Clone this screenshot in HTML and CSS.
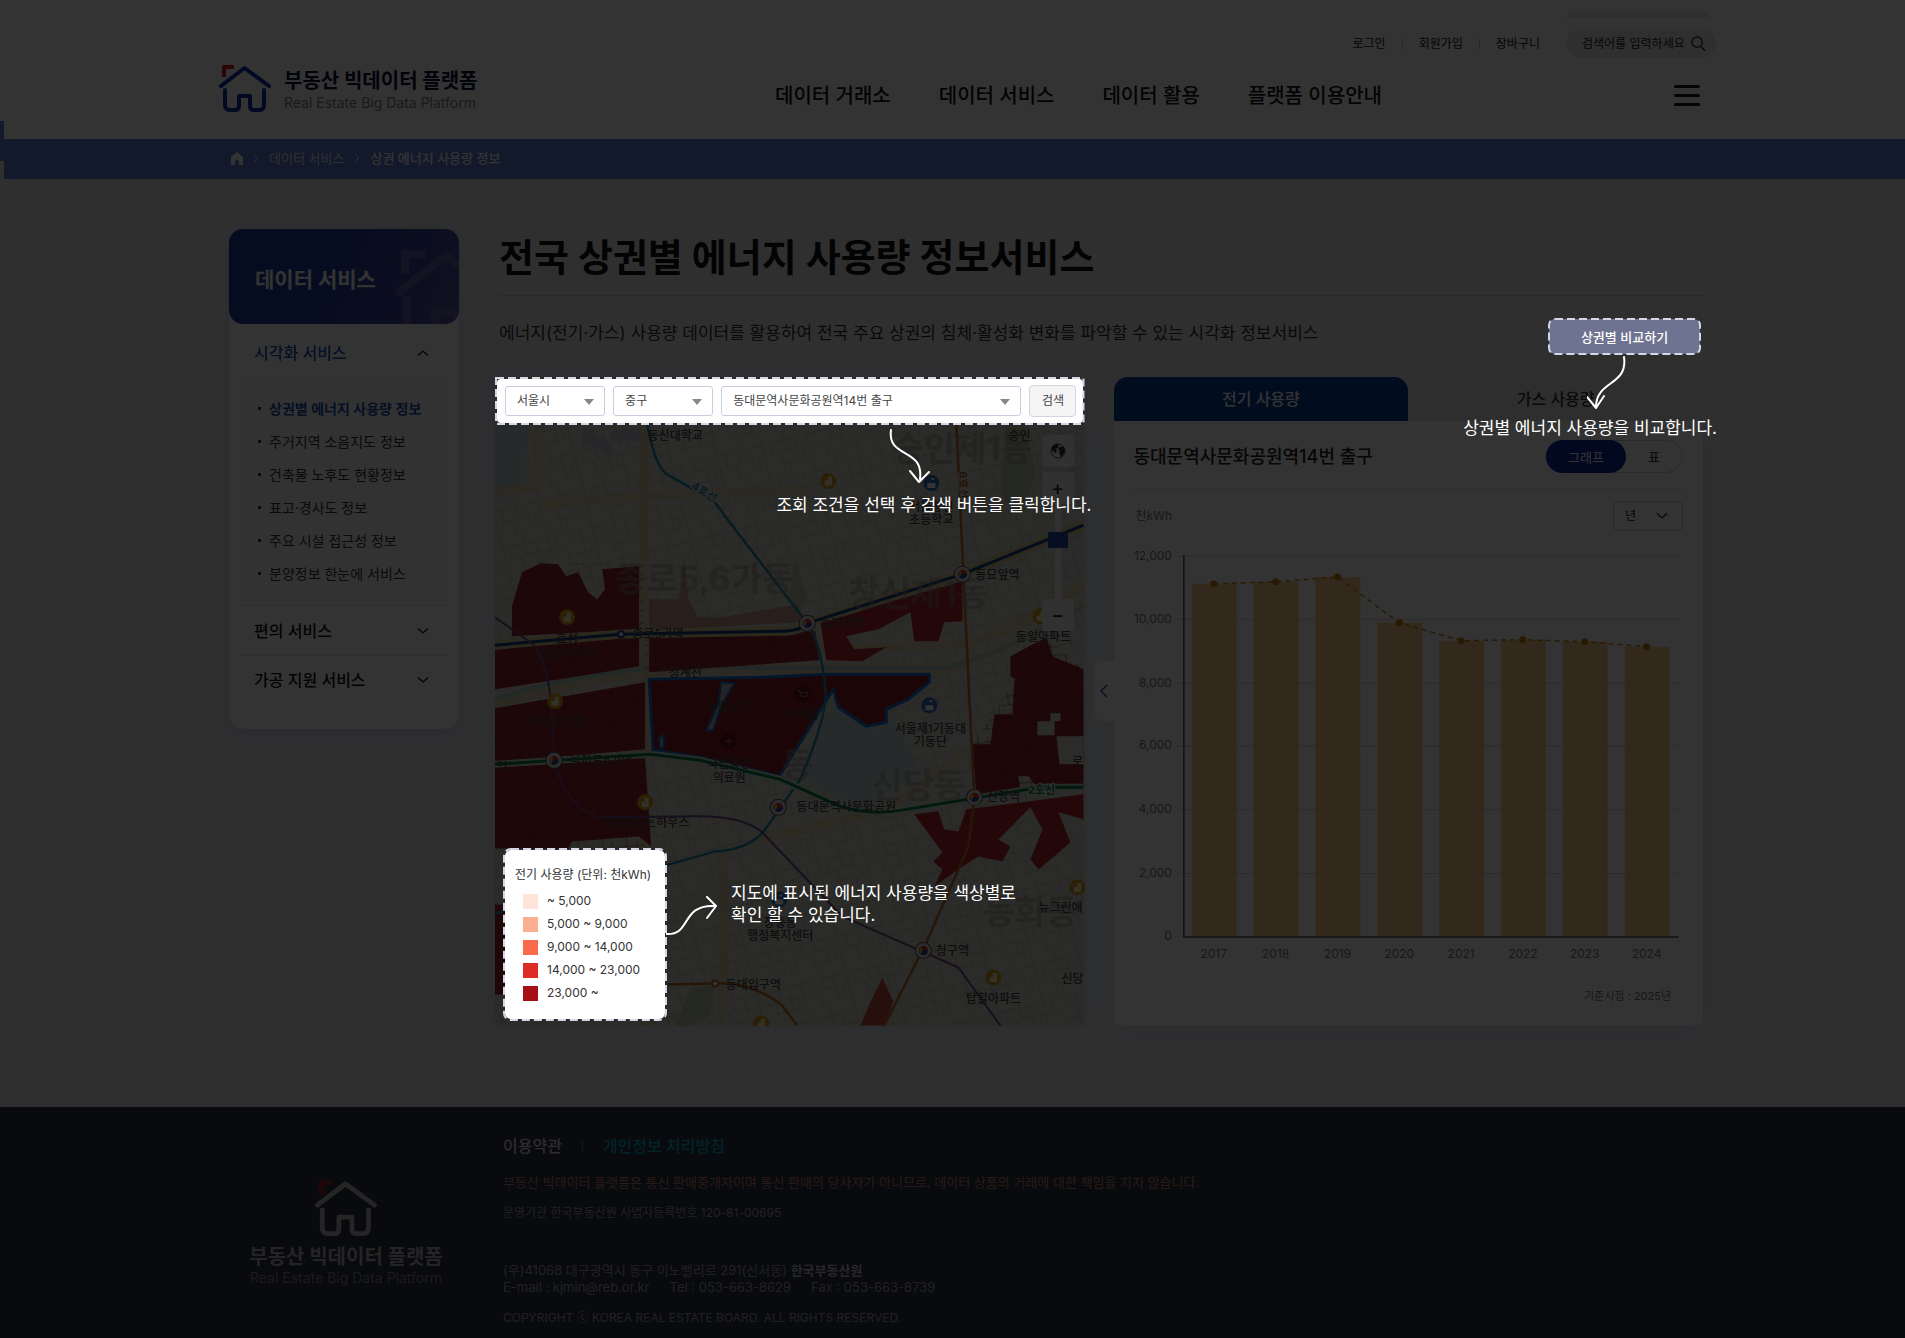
FILE: index.html
```html
<!DOCTYPE html>
<html lang="ko">
<head>
<meta charset="utf-8">
<meta name="viewport" content="width=device-width, initial-scale=1">
<title>전국 상권별 에너지 사용량 정보서비스</title>
<link rel="stylesheet" href="styles.css">
</head>
<body>
<svg class="defs" width="0" height="0" aria-hidden="true">
  <symbol id="house" viewBox="0 0 52 48">
    <path d="M5 13V3h10" class="house-corner"/>
    <path d="M2 22 25.500 4 50 22M6 26v15q0 5 5 5h5q4 0 4-4V32h11v10q0 4 4 4h5q5 0 5-5V26" class="house-line"/>
  </symbol>
  <symbol id="down" viewBox="0 0 12 8"><path d="M1 1.500 6 6l5-4.500" fill="none" stroke="currentColor" stroke-width="1.300"/></symbol>
</svg>

<header class="header">
  <div class="util">
    <a href="#">로그인</a><a href="#">회원가입</a><a href="#">장바구니</a>
    <label class="search"><input type="text" placeholder="검색어를 입력하세요" aria-label="검색어">
      <svg width="16" height="18" viewBox="0 0 16 18" fill="none" stroke="#333" stroke-width="1.500"><circle cx="6.500" cy="7" r="5.500"/><path d="m10.500 11.500 4.500 5"/></svg>
    </label>
  </div>
  <div class="main-bar">
    <a class="logo" href="#">
      <svg width="52" height="48"><use href="#house"/></svg>
      <span><strong>부동산 빅데이터 플랫폼</strong><small>Real Estate Big Data Platform</small></span>
    </a>
    <nav class="gnb"><a href="#">데이터 거래소</a><a href="#">데이터 서비스</a><a href="#">데이터 활용</a><a href="#">플랫폼 이용안내</a></nav>
    <button class="menu" type="button" aria-label="전체 메뉴"><i></i><i></i><i></i></button>
  </div>
</header>

<nav class="crumbs" aria-label="현재 위치">
  <a href="#" aria-label="홈"><svg width="12" height="13" viewBox="0 0 12 13"><path d="M6 0 12 5v8H8V9q-2-3-4 0v4H0V5z" fill="#fff"/></svg></a>
  <svg class="sep" width="6" height="10" viewBox="0 0 6 10"><path d="m1 1 4 4-4 4" fill="none" stroke="#d5def8"/></svg>
  <a href="#">데이터 서비스</a>
  <svg class="sep" width="6" height="10" viewBox="0 0 6 10"><path d="m1 1 4 4-4 4" fill="none" stroke="#d5def8"/></svg>
  <strong>상권 에너지 사용량 정보</strong>
</nav>

<div class="page">
  <aside class="side">
    <h2>데이터 서비스<svg width="78" height="76" viewBox="0 0 39 38"><use href="#house" width="52" height="48"/></svg></h2>
    <a class="group open" href="#">시각화 서비스<svg width="12" height="8"><use href="#down"/></svg></a>
    <ul>
      <li class="on"><a href="#">상권별 에너지 사용량 정보</a></li>
      <li><a href="#">주거지역 소음지도 정보</a></li>
      <li><a href="#">건축물 노후도 현황정보</a></li>
      <li><a href="#">표고·경사도 정보</a></li>
      <li><a href="#">주요 시설 접근성 정보</a></li>
      <li><a href="#">분양정보 한눈에 서비스</a></li>
    </ul>
    <a class="group" href="#">편의 서비스<svg width="12" height="8"><use href="#down"/></svg></a>
    <a class="group" href="#">가공 지원 서비스<svg width="12" height="8"><use href="#down"/></svg></a>
  </aside>

  <main class="content">
    <h1>전국 상권별 에너지 사용량 정보서비스</h1>
    <div class="intro">
      <p>에너지(전기·가스) 사용량 데이터를 활용하여 전국 주요 상권의 침체·활성화 변화를 파악할 수 있는 시각화 정보서비스</p>
      <div class="compare spot">
        <button type="button">상권별 비교하기</button>
        <svg class="dash"><rect x="1" y="1" rx="6"/></svg>
        <div class="tip tip-compare">
          <svg width="40" height="56" viewBox="0 0 40 56"><path d="M33 1C37 30 6 24 5 50M-4 41 5 52l8-12" transform="translate(4 1)"/></svg>
          <p>상권별 에너지 사용량을 비교합니다.</p>
        </div>
      </div>
    </div>

    <div class="columns">
      <section class="map" aria-label="지도">
        <svg class="map-art" viewBox="495 378 589 648" preserveAspectRatio="xMidYMid slice">
          <defs>
            <pattern id="streets" width="46" height="38" patternUnits="userSpaceOnUse" patternTransform="rotate(-14)">
              <path d="M0 9h46M0 21q12-3 24 0t22 0M0 32h30M9 0v21M20 9v29M33 0v38M41 9v12M27 21v11M4 21v17" fill="none" stroke="#bdb9b1" stroke-width=".8"/>
            </pattern>
            <pattern id="blocks" width="24" height="22" patternUnits="userSpaceOnUse" patternTransform="rotate(-6)">
              <path d="M0 6h24M0 15h24M7 0v22M17 0v15" fill="none" stroke="#5e1016" stroke-width=".7"/>
            </pattern>
            <g id="station"><circle r="8" fill="#ddd" stroke="#555"/><circle r="4.500" fill="#e02a30"/><path d="M-4.500 0a4.500 4.500 0 0 0 9 0z" fill="#174ba5"/><path d="M-3 3.400Q-5 0-2-4 0 0-3 3.400z" fill="#f4c31c"/></g>
            <g id="poi"><circle r="8" fill="#d79a16"/><path d="M-4 5V-1h3v-4h5V5zM1-3v1M1 0v1" fill="#fff3c5" stroke="#d79a16" stroke-width=".8"/></g>
            <g id="school"><circle r="8" fill="#2a6dbd"/><path d="M-4 0h8v5h-8zM0 0v-5h3v2H0" fill="#fff"/></g>
          </defs>
          <path fill="#d7d5ca" d="M495 378h589v648H495z"/>
          <path fill="url(#streets)" d="M495 378h589v648H495z"/>
          <path fill="#c4d2d0" d="M495 426h34l-4 60-30 20zM833 705l40 25 20-10 30 55-60 30-45-15-20-20z"/>
          <path fill="#bac3a3" d="M1005 426h20l10 50-15 40-20-20zM795 560l12 40-8 15-10-20zM690 990l25-5-5 30-20 11h-15z"/>
          <path fill="#c3bccb" d="M582 430h12v8h11l8 14-6 4-8-7-16-2zM613 430h28v12h-32z"/>
          <g fill="none" stroke="#d9ceaa" stroke-width="9">
            <path d="M538 378v110l-43 5M538 506l110-10 160-5M644 378v648M495 676q150-30 325-26l140-5q50-10 124-60M495 705q130-40 260-35h190q70-20 138-65M758 840l130-30 80-60M720 850q10 60 0 176"/>
          </g>
          <path fill="none" stroke="#a6c8bf" stroke-width="4" d="M495 700q120-40 260-31h190q70-20 138-62"/>
          <g fill="#96262c">
            <path d="m541 564 17 1 8 12 12-4 10 20 9 7 8-10-3-20 37-3v63l-127 7v-30l10-34zM495 650l144-13v30l-79 13-65 10zM649 636l166-4 4 29-170 12z"/>
            <path d="M495 709 645 683v67l-150 13zM495 768l150-10 6 89-12-10-67 5-4 7h-73zM495 905h10v90h-10z"/>
            <path d="m1046 638 6 19 31 13v116l-45 4-10-13h-10l2 13-44 7-4-52h18l4-30h18l2-35 20 13-24-16v-20z"/>
          </g>
          <g fill="#b32c2f">
            <path d="m820 622 142-40v40l-18 1-6 19h-24l-4-29-32 17-32 7 8 13 32-2-24 14-36-1z"/>
            <path d="m914 815 24-3 6 18 14 2 8-22 117-15v25l-25-7 12 30-32 27-8-10 12-30-12-22-32 32 12 7-8 15-24-5-16 10-28 20 8-17-9-8 9-9z"/>
          </g>
          <path fill="#c9988a" d="M649 600h30l5-40 4 40 10 18h23l76-13 4 18-152 8z"/>
          <path fill="#c0503f" d="m882 978 11 24-9 24h-24l10-23z"/>
          <path fill="url(#blocks)" d="m541 564 98 3v63l-144 20v40l144-23v-37h176l4 29-170 12-5 10v167l-150-1V709l150-26V564zM1046 638l37 32v116l-107 11-4-52z" opacity=".6"/>
          <path fill="#851c23" stroke="#1774cf" stroke-width="3" d="m649 680 112-2 64-3h104v8l-21 17-22 10v13l-20 4-28-19-5-18-54 87-78-19-48-7z"/>
          <path fill="#b9b2ad" stroke="#1774cf" stroke-width="2" d="m721 683 13 1-14 24-7 23h-7l12-26zM660 750l-1-12 4-2 1 10z"/>
          <g fill="#d7d5ca"><path d="M1037 722h17v14h-17zM1056 737h27v28h-24zM1050 714h10v8h-10z"/></g>
          <g fill="none" stroke-linejoin="round">
            <path stroke="#d5c58c" stroke-width="9" d="m495 646 125-11 160-3q20 0 27-8l155-49 121-49"/>
            <path stroke="#123f86" stroke-width="3" d="m495 646 125-11 160-3q20 0 27-8l155-49 121-49"/>
            <path stroke="#268cab" stroke-width="2.500" d="M646 420q9 50 22 56l36 20q12 6 20 20l83 108q14 20 18 66 3 25-25 90l-35 50q-15 20-50 22l-230 65"/>
            <path stroke="#c16a25" stroke-width="2.500" d="m956 426 7 149 5 105 6 118-6 49-42 96-42 83M667 985l48-1q35-2 66 21l16 21"/>
            <path stroke="#c6dccb" stroke-width="7" d="m495 765 155-10 50 6 80 19 60 27q30 9 60 4l140-23h43"/>
            <path stroke="#087e47" stroke-width="3" d="m495 765 155-10 50 6 80 19 60 27q30 9 60 4l140-23h43"/>
            <path stroke="#76498f" stroke-width="2" d="m495 618 38 27q15 20 18 60l4 60q12 45 45 53l89-1q50-2 72 15l81 85 80 35 36 16 42 58"/>
          </g>
          <g class="district"><text x="704" y="592">종로5,6가동</text><text x="918" y="607">창신제1동</text><text x="962" y="462">숭인제1동</text><text x="918" y="799">신당동</text><text x="1030" y="925">동화동</text><text x="797" y="778">동</text></g>
          <g class="place">
            <text x="675" y="441">동신대학교</text><text x="1019" y="441">숭인</text><text x="931" y="512">서울창신</text><text x="931" y="525">초등학교</text><text x="997" y="580">동묘앞역</text><text x="842" y="628">동대문역</text><text x="658" y="639">종로5가역</text><text x="567" y="644">효성</text><text x="567" y="659">쥬얼리시티</text><text x="685" y="678">청계천</text><text x="1043" y="642">동일아파트</text><text x="555" y="727">투유호스텔</text><text x="728" y="712">동일상가</text><text x="802" y="720">두타몰</text><text x="601" y="766">을지로4가역</text><text x="729" y="769">국립중앙</text><text x="729" y="783">의료원</text><text x="930" y="734">서울제1기동대</text><text x="930" y="747">기동단</text><text x="846" y="812">동대문역사문화공원</text><text x="1003" y="802">신당역</text><text x="645" y="828">케이게스트하우스</text><text x="1077" y="767">로</text><text x="780" y="928">장충동</text><text x="780" y="941">행정복지센터</text><text x="1060" y="913">뉴그린애</text><text x="952" y="956">청구역</text><text x="753" y="989">동대입구역</text><text x="993" y="1003">탑힐아파트</text><text x="1072" y="983">신당</text><text x="502" y="772">역</text>
          </g>
          <g class="line-tag"><text transform="translate(702 496) rotate(32)" fill="#2d87a3">4호선</text><text transform="translate(959 486) rotate(88)" fill="#b15d20">6호선</text><text x="1041" y="795" fill="#087e47">2호선</text></g>
          <use href="#station" x="807" y="624"/><use href="#station" x="962" y="575"/><use href="#station" x="554" y="761"/><use href="#station" x="974" y="798"/><use href="#station" x="778" y="808"/><use href="#station" x="923" y="951"/>
          <circle cx="621" cy="635" r="3" fill="#fff" stroke="#123f86" stroke-width="2"/><circle cx="715" cy="984" r="3" fill="#fff" stroke="#c16a25" stroke-width="2"/>
          <use href="#poi" x="828" y="482"/><use href="#poi" x="567" y="618"/><use href="#poi" x="555" y="702"/><use href="#poi" x="645" y="803"/><use href="#poi" x="1077" y="888"/><use href="#poi" x="993" y="978"/><use href="#poi" x="761" y="1024"/><use href="#poi" x="1040" y="617"/>
          <use href="#school" x="931" y="484"/><use href="#school" x="929" y="706"/><use href="#school" x="779" y="900"/>
          <g fill="#651018"><circle cx="802" cy="695" r="8"/><circle cx="728" cy="742" r="8"/><path d="M724 742h8M728 738v8M797 691h2l2 6h5l2-4h-8" fill="none" stroke="#b96464"/></g>
        </svg>

        <form class="filters spot">
          <div class="filters-inner">
            <label class="pick"><select aria-label="시도"><option>서울시</option></select></label>
            <label class="pick"><select aria-label="시군구"><option>중구</option></select></label>
            <label class="pick wide"><select aria-label="상권"><option>동대문역사문화공원역14번 출구</option></select></label>
            <button type="button">검색</button>
          </div>
          <svg class="dash"><rect x="1" y="1"/></svg>
          <div class="tip tip-search">
            <svg width="44" height="56" viewBox="0 0 44 56"><path d="M5 1C1 30 38 18 34 50M24 42l9 11 10-10"/></svg>
            <p>조회 조건을 선택 후 검색 버튼을 클릭합니다.</p>
          </div>
        </form>

        <div class="zoomer">
          <button type="button" aria-label="전체 보기"><svg width="16" height="16" viewBox="0 0 16 16"><circle cx="8" cy="8" r="7" fill="none" stroke="#444"/><path d="M2 4q3-4 6-3l1 3-3 2 1 3-2 1-3-3zM10 4l4 0 1 5-4 5-2-4 1-2-2-2z" fill="#333"/></svg></button>
          <button type="button" aria-label="확대">+</button>
          <span class="track"><i></i></span>
          <button type="button" aria-label="축소">−</button>
        </div>

        <div class="legend spot">
          <h3>전기 사용량 (단위: 천kWh)</h3>
          <ul>
            <li class="lv1">~ 5,000</li><li class="lv2">5,000 ~ 9,000</li><li class="lv3">9,000 ~ 14,000</li><li class="lv4">14,000 ~ 23,000</li><li class="lv5">23,000 ~</li>
          </ul>
          <svg class="dash"><rect x="1" y="1" rx="7"/></svg>
          <div class="tip tip-legend">
            <svg width="52" height="44" viewBox="0 0 52 44"><path d="M0 38C26 40 14 8 49 10M41 1l9 9-9 12"/></svg>
            <p>지도에 표시된 에너지 사용량을 색상별로<br>확인 할 수 있습니다.</p>
          </div>
        </div>
      </section>

      <section class="panel">
        <button class="fold" type="button" aria-label="접기"><svg width="8" height="14" viewBox="0 0 8 14"><path d="M7 1 1 7l6 6" fill="none" stroke="#1c50b4" stroke-width="1.500"/></svg></button>
        <div class="tabs"><button class="on" type="button">전기 사용량</button><button type="button">가스 사용량</button></div>
        <div class="panel-body">
          <div class="panel-head">
            <h2>동대문역사문화공원역14번 출구</h2>
            <div class="toggle"><button class="on" type="button">그래프</button><button type="button">표</button></div>
          </div>
          <div class="unit"><span>천kWh</span>
            <label class="period"><select aria-label="기간 단위"><option>년</option></select><svg width="12" height="8"><use href="#down"/></svg></label>
          </div>
          <svg class="chart" viewBox="1133 536 551 434" role="img" aria-label="연도별 전기 사용량">
            <path d="M1175 556.500h504M1175 619.500h504M1175 683.500h504M1175 746.500h504M1175 810.500h504M1175 874.500h504M1175 937.500h8" stroke="#e0e0e0"/>
            <path fill="#f9c97f" fill-opacity=".9" d="M1191 584h45v353h-45zM1253 582h45v355h-45zM1315 577h45v360h-45zM1377 623h45v314h-45zM1439 641h45v296h-45zM1501 640h45v297h-45zM1563 642h45v295h-45zM1625 647h45v290h-45z"/>
            <path d="M1175 619.500h504M1175 683.500h504M1175 746.500h504M1175 810.500h504M1175 874.500h504" stroke="#000" stroke-opacity=".05"/>
            <path d="M1183 555v383h496" fill="none" stroke="#555" stroke-width="1.500"/>
            <path d="m1213 584 62-2 62-5 62 46 62 18 62-1 62 2 62 5" fill="none" stroke="#c8861a" stroke-width="1.500" stroke-dasharray="5 4"/>
            <g fill="#c98203"><circle cx="1213" cy="584" r="3.500"/><circle cx="1275" cy="582" r="3.500"/><circle cx="1337" cy="577" r="3.500"/><circle cx="1399" cy="623" r="3.500"/><circle cx="1461" cy="641" r="3.500"/><circle cx="1523" cy="640" r="3.500"/><circle cx="1585" cy="642" r="3.500"/><circle cx="1647" cy="647" r="3.500"/></g>
            <g class="ylab"><text x="1171" y="560">12,000</text><text x="1171" y="623">10,000</text><text x="1171" y="687">8,000</text><text x="1171" y="750">6,000</text><text x="1171" y="814">4,000</text><text x="1171" y="878">2,000</text><text x="1171" y="941">0</text></g>
            <g class="xlab"><text x="1213" y="959">2017</text><text x="1275" y="959">2018</text><text x="1337" y="959">2019</text><text x="1399" y="959">2020</text><text x="1461" y="959">2021</text><text x="1523" y="959">2022</text><text x="1585" y="959">2023</text><text x="1647" y="959">2024</text></g>
          </svg>
          <p class="note">기준시점 : 2025년</p>
        </div>
      </section>
    </div>
  </main>
</div>

<footer class="footer">
  <div class="foot-logo">
    <svg width="62" height="57"><use href="#house"/></svg>
    <strong>부동산 빅데이터 플랫폼</strong><small>Real Estate Big Data Platform</small>
  </div>
  <div class="foot-text">
    <nav><a href="#">이용약관</a><a class="privacy" href="#">개인정보 처리방침</a></nav>
    <p class="notice">부동산 빅데이터 플랫폼은 통신 판매중개자이며 통신 판매의 당사자가 아니므로, 데이터 상품의 거래에 대한 책임을 지지 않습니다.</p>
    <p class="org">운영기관 한국부동산원 사업자등록번호 120-81-00695</p>
    <address>(우)41068 대구광역시 동구 이노밸리로 291(신서동) <b>한국부동산원</b><br><span>E-mail : kjmin@reb.or.kr</span><span>Tel : 053-663-8629</span><span>Fax : 053-663-8739</span></address>
    <p class="copy">COPYRIGHT ⓒ KOREA REAL ESTATE BOARD. ALL RIGHTS RESERVED.</p>
  </div>
</footer>
<div class="edge"></div>
<div class="sliver"></div>
<div class="dim"></div>
</body>
</html>
```
FILE: styles.css
```css
* { box-sizing: border-box; margin: 0; padding: 0; }
body { position: relative; min-width: 1500px; background: #ebecf0; color: #111; font: 13px/20px Inter, "Noto Sans CJK KR", sans-serif; }
a { color: inherit; text-decoration: none; }
ul { list-style: none; }
button, input, select { font: inherit; color: inherit; border: 0; background: none; }
svg { display: block; }
.defs { position: absolute; }
.house-line, .house-corner { fill: none; stroke: currentColor; stroke-width: 4; stroke-linecap: round; stroke-linejoin: round; }
.house-corner { stroke: var(--corner, #d0211c); stroke-linecap: butt; }

/* page header */
.header { height: 139px; padding: 29px 189px 0 219px; background: #fff; }
.util { display: flex; justify-content: flex-end; align-items: center; height: 29px; font-size: 12px; }
.util a { padding: 0 16px; line-height: 12px; border-left: 1px solid #ccc; }
.util a:first-child { border: 0; }
.search { display: flex; align-items: center; width: 150px; height: 29px; margin-left: 10px; padding: 0 10px 0 16px; border-radius: 15px; background: #ebebf0; }
.search input { width: 109px; outline: 0; }
.search input::placeholder { color: #222; opacity: 1; }
.main-bar { display: grid; grid-template-columns: 556px 1fr auto; }
.logo { display: flex; gap: 13px; margin-top: 6px; color: #0a2fa8; }
.logo strong, .logo small { display: block; }
.logo strong { padding-top: 5px; font-size: 20px; line-height: 24px; color: #101038; }
.logo small { font-size: 14px; line-height: 20px; color: #808080; }
.gnb { display: flex; gap: 48px; margin-top: 26px; font-size: 20px; line-height: 24px; font-weight: 500; }
.menu { display: grid; gap: 6px; align-content: start; width: 26px; margin: 27px 16px 0 0; }
.menu i { height: 3px; border-radius: 2px; background: #111; }

.crumbs { display: flex; align-items: center; gap: 10px; height: 40px; padding: 0 0 2px 231px; background: #557dd7; color: #e6ebfa; }
.crumbs strong { color: #fff; font-weight: 500; }

/* body columns */
.page { display: flex; align-items: flex-start; gap: 36px; padding: 50px 202px 81px 229px; }
.side { flex: none; width: 230px; padding-bottom: 25px; border-radius: 16px; background: #fff; box-shadow: 0 4px 20px #cdd2ec; }
.side h2 { position: relative; height: 95px; padding: 36px 26px; border-radius: 14px; overflow: hidden; background: linear-gradient(115deg, #34439a00 45%, #5350a0), #203f9c; color: #fff; font-size: 21px; line-height: 30px; }
.side h2 svg { position: absolute; right: -14px; bottom: 0; color: #5f61a8; --corner: #5f61a8; }
.group { display: flex; align-items: center; justify-content: space-between; height: 49px; margin: 0 10px; padding: 0 20px 0 15px; font-size: 16px; font-weight: 500; }
.group + .group { border-top: 1px solid #e3e3e3; }
.group.open { height: 53px; padding-top: 5px; color: #1b50b5; }
.group.open svg { transform: rotate(180deg); color: #111; }
.side ul { margin: 0 10px; padding: 15px 0 15px 19px; border-bottom: 1px solid #e0e0e0; background: #fbfbfb; }
.side li { display: flex; align-items: center; gap: 8px; height: 33px; font-size: 14px; color: #333; }
.side li::before { content: ""; width: 3px; height: 3px; background: #333; }
.side li.on a { color: #1b50b5; font-weight: 600; }

.content { flex: 1; min-width: 0; }
h1 { margin: 0 0 0 4px; padding-bottom: 10px; border-bottom: 1px solid #c8c9cd; font-size: 38px; line-height: 56px; }
.intro { display: flex; justify-content: space-between; padding: 22px 2px 22px 4px; }
.intro > p { font-size: 17px; line-height: 30px; color: #333; }
.columns { display: flex; gap: 29px; }
.map, .panel { position: relative; flex: 1 1 0; min-width: 0; }

/* map */
.map { box-shadow: 0 0 20px #d3d7ea; }
.map-art { width: 100%; height: 100%; }
.district { font-size: 34px; font-weight: 700; fill: #8d8b86; text-anchor: middle; opacity: .45; }
.place { font-size: 12px; font-weight: 500; fill: #4b4546; text-anchor: middle; }
.line-tag { font-size: 11px; font-weight: 700; text-anchor: middle; stroke: #e6e6e6; stroke-width: 2px; paint-order: stroke; }
.zoomer { position: absolute; top: 58px; right: 11px; display: flex; flex-direction: column; align-items: center; }
.zoomer button { display: grid; place-items: center; width: 32px; height: 32px; border-radius: 4px; background: #f4f4f4; font-size: 20px; color: #222; }
.zoomer button:first-child { margin-bottom: 5px; }
.track { width: 6px; height: 95px; background: #f2f2f6; }
.track i { display: block; width: 20px; height: 16px; margin: 28px 0 0 -7px; background: #2b46ab; }

/* chart panel */
.panel { display: flex; flex-direction: column; }
.tabs { position: relative; z-index: 1; display: flex; }
.tabs button { flex: 1; height: 44px; border-radius: 14px 14px 0 0; background: #e6e6ec; color: #333; font-size: 16px; font-weight: 500; }
.tabs .on { background: #06449d; color: #fff; }
.panel-body { flex: 1; padding: 19px 20px 0; border-radius: 0 0 8px 8px; background: #fff; box-shadow: 0 6px 20px #d3d7ea; }
.panel-head { display: flex; align-items: center; justify-content: space-between; height: 50px; padding-bottom: 16px; border-bottom: 1px solid #ddd; }
.panel-head h2 { font-size: 18px; font-weight: 500; color: #222; }
.toggle { display: flex; width: 138px; height: 33px; border: 1px solid #ccc; border-radius: 17px; font-size: 13px; }
.toggle button { flex: 1; }
.toggle .on { flex: none; width: 80px; margin: -1px 0; border-radius: 17px; background: #0e2a9e; color: #fff; }
.unit { display: flex; justify-content: space-between; align-items: center; padding: 11px 0 5px 2px; font-size: 12px; color: #777; }
.period { position: relative; color: #222; }
.period select { appearance: none; width: 70px; height: 30px; padding-left: 11px; border: 1px solid #ccc; border-radius: 4px; }
.period svg { position: absolute; top: 11px; right: 15px; }
.chart { width: 100%; font-size: 12px; fill: #777; }
.ylab { text-anchor: end; }
.xlab { text-anchor: middle; }
.note { padding: 17px 12px 17px; text-align: right; font-size: 11px; color: #777; }
.fold { position: absolute; left: -19px; top: 284px; display: grid; place-items: center; width: 19px; height: 60px; border-radius: 8px 0 0 8px; background: #fff; }

/* footer */
.footer { display: flex; gap: 44px; height: 231px; padding-left: 229px; background: #2d3246; color: #a4a4a8; }
.foot-logo { display: flex; flex-direction: column; align-items: center; width: 230px; padding: 72px 0 0 4px; color: #b9b9bb; --corner: #9f2426; }
.foot-logo svg { margin-bottom: 9px; }
.foot-logo strong { font-size: 20px; line-height: 24px; color: #b4b4b8; }
.foot-logo small { font-size: 14px; line-height: 18px; color: #85858a; }
.foot-text { padding-top: 27px; }
.foot-text nav { display: flex; align-items: center; font-size: 16px; line-height: 24px; font-weight: 500; color: #dcdcdc; }
.privacy { position: relative; margin-left: 41px; color: #00b4c4; }
.privacy::before { content: ""; position: absolute; left: -21px; top: 6px; width: 1px; height: 12px; background: #6a6f82; }
.notice { padding-top: 14px; color: #c98468; }
.org { padding-top: 12px; font-size: 12px; line-height: 18px; }
address { padding-top: 40px; font-style: normal; line-height: 17px; }
address span { margin-right: 20px; }
address b { color: #c4c4c8; }
.copy { padding-top: 12px; font-size: 12px; }

/* guide layer */
.edge { position: absolute; left: 0; top: 121px; width: 4px; height: 58px; background: linear-gradient(#557dd7 40px, #ebecf0 40px); }
.sliver { position: absolute; top: 11px; right: 195px; width: 144px; height: 7px; border-radius: 12px 12px 0 0; background: #ebebf0; }
.dim { position: absolute; inset: 0; z-index: 5; background: #000c; }
.spot { z-index: 10; }
.dash { position: absolute; left: 0; top: 0; width: 100%; height: 100%; pointer-events: none; }
.dash rect { width: calc(100% - 2px); height: calc(100% - 2px); fill: none; stroke: #d3d7e6; stroke-width: 2; stroke-dasharray: 8 4; }
.tip { position: absolute; color: #fff; font-size: 17px; line-height: 22px; white-space: nowrap; }
.tip svg { fill: none; stroke: #fff; stroke-width: 2; stroke-linecap: round; stroke-linejoin: round; }
.compare { position: relative; flex: none; width: 153px; height: 37px; padding: 1px; }
.compare button { width: 100%; height: 100%; border-radius: 6px; background: #6f7392; color: #fff; font-weight: 500; }
.tip-compare { top: 37px; right: -16px; }
.tip-compare svg { margin: 0 0 6px 124px; }
.filters { position: absolute; top: 0; left: 0; width: 100%; height: 48px; padding: 2px; font-size: 12px; color: #444; }
.filters-inner { display: flex; align-items: center; gap: 8px; height: 100%; padding: 0 6px 0 8px; border-radius: 4px; background: #fff; }
.pick { position: relative; flex: 1 1 0; }
.pick.wide { flex: 3 1 0; }
.pick select { appearance: none; width: 100%; height: 30px; padding-left: 11px; border: 1px solid #ccccdd; border-radius: 3px; background: #fff; }
.pick::after { content: ""; position: absolute; right: 11px; top: 13px; border: 5px solid transparent; border-top: 6px solid #888; border-bottom: 0; }
.filters button { width: 47px; height: 32px; border: 1px solid #d5d5df; border-radius: 4px; background: #f5f5f6; }
.tip-search { top: 52px; right: -7px; }
.tip-search svg { margin: 0 0 9px 110px; }
.legend { position: absolute; left: 8px; bottom: 5px; width: 164px; height: 173px; padding: 15px 0 0 10px; border: 2px solid transparent; border-radius: 8px; background: #fff; background-clip: padding-box; color: #333; font-size: 12px; }
.legend .dash { left: -2px; top: -2px; width: calc(100% + 4px); height: calc(100% + 4px); }
.legend h3 { font-size: 12px; font-weight: 400; }
.legend ul { padding: 5px 0 0 8px; }
.legend li { display: flex; align-items: center; gap: 9px; height: 23px; }
.legend li::before { content: ""; width: 15px; height: 15px; background: var(--c); }
.lv1 { --c: #fee5d9; }
.lv2 { --c: #fcae91; }
.lv3 { --c: #fb6a4a; }
.lv4 { --c: #de2d26; }
.lv5 { --c: #a50f15; }
.tip-legend { left: 161px; top: 32px; display: flex; gap: 13px; }
.tip-legend svg { margin-top: 14px; }
```
